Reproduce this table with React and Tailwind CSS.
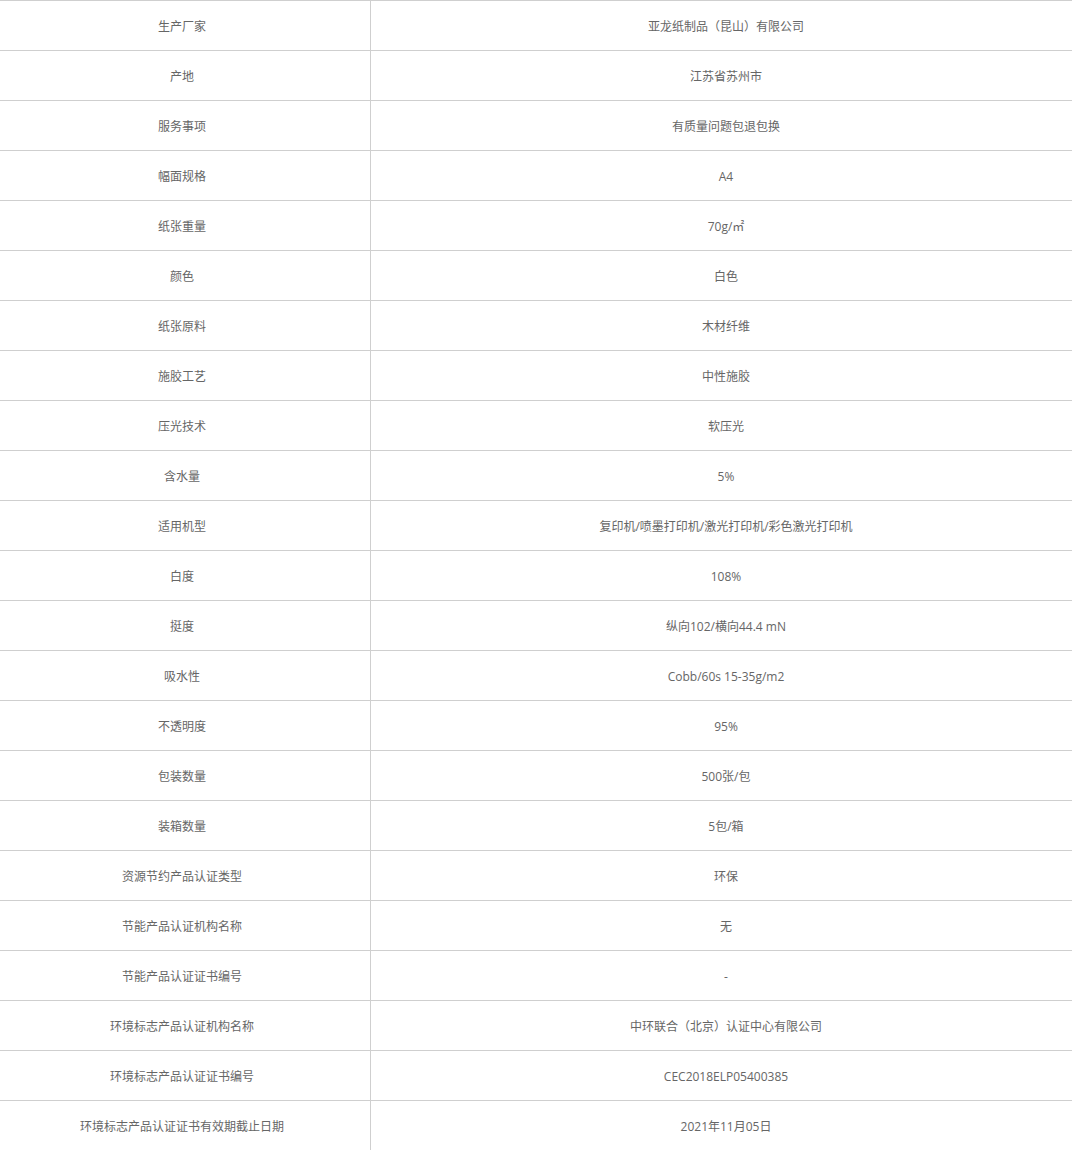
import React from 'react';

const rows = [
  ['生产厂家', '亚龙纸制品（昆山）有限公司'],
  ['产地', '江苏省苏州市'],
  ['服务事项', '有质量问题包退包换'],
  ['幅面规格', 'A4'],
  ['纸张重量', '70g/㎡'],
  ['颜色', '白色'],
  ['纸张原料', '木材纤维'],
  ['施胶工艺', '中性施胶'],
  ['压光技术', '软压光'],
  ['含水量', '5%'],
  ['适用机型', '复印机/喷墨打印机/激光打印机/彩色激光打印机'],
  ['白度', '108%'],
  ['挺度', '纵向102/横向44.4 mN'],
  ['吸水性', 'Cobb/60s 15-35g/m2'],
  ['不透明度', '95%'],
  ['包装数量', '500张/包'],
  ['装箱数量', '5包/箱'],
  ['资源节约产品认证类型', '环保'],
  ['节能产品认证机构名称', '无'],
  ['节能产品认证证书编号', '-'],
  ['环境标志产品认证机构名称', '中环联合（北京）认证中心有限公司'],
  ['环境标志产品认证证书编号', 'CEC2018ELP05400385'],
  ['环境标志产品认证证书有效期截止日期', '2021年11月05日'],
];

export default function App() {
  return (
    <div
      className="w-[1072px] bg-white text-[12px] text-[#666]"
      style={{ fontFamily: '"Open Sans", "Noto Sans CJK SC", sans-serif' }}
    >
      {rows.map(([label, value]) => (
        <div key={label} className="flex h-[50px] border-t border-[#cfcfcf]">
          <div className="w-[370px] shrink-0 flex items-center justify-center pr-[6px] pt-[2px]">
            {label}
          </div>
          <div className="flex-1 flex items-center justify-center border-l border-[#cfcfcf] pl-[9px] pt-[2px]">
            {value}
          </div>
        </div>
      ))}
    </div>
  );
}
